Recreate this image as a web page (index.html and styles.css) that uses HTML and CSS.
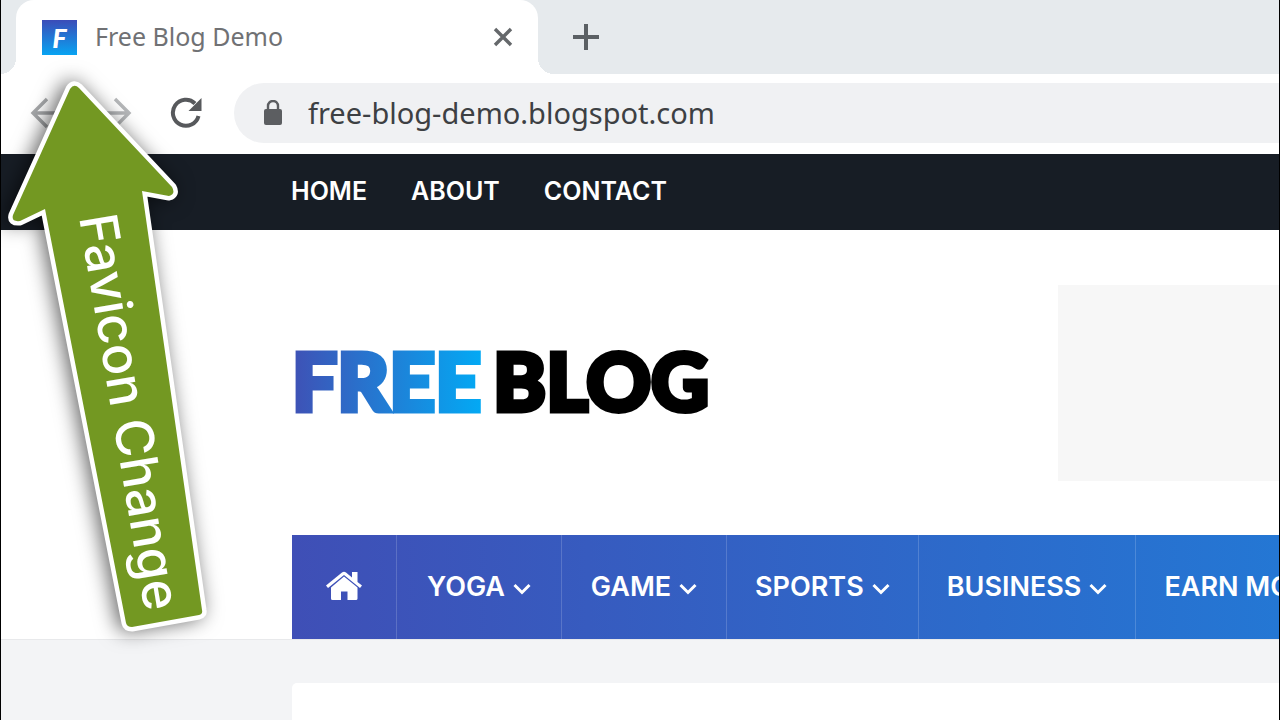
FILE: index.html
```html
<!DOCTYPE html>
<html lang="en">
<head>
<meta charset="utf-8">
<title>Free Blog Demo</title>
<link rel="stylesheet" href="styles.css">
</head>
<body>
<div class="frame">
  <header class="browser">
    <div class="tab-strip">
      <div class="tab">
        <span class="favicon">F</span>
        <span class="tab-title">Free Blog Demo</span>
        <button class="icon-button" aria-label="Close tab"><svg width="20" height="20" viewBox="0 0 20 20"><path d="M2 2L18 18M18 2L2 18" stroke="#65686b" stroke-width="3.4"/></svg></button>
      </div>
      <button class="icon-button new-tab" aria-label="New tab"><svg width="28" height="28" viewBox="0 0 28 28"><path d="M1 14H27M14 1V27" stroke="#5b6064" stroke-width="4"/></svg></button>
    </div>
    <div class="toolbar">
      <div class="history">
        <button class="icon-button" aria-label="Back"><svg width="34" height="34" viewBox="0 0 34 34" fill="none" stroke="#a5a7a9" stroke-width="3.4"><path d="M33 17H3M17 3L3 17L17 31"/></svg></button>
        <button class="icon-button" aria-label="Forward"><svg width="34" height="34" viewBox="0 0 34 34" fill="none" stroke="#b5b7b9" stroke-width="3.4"><path d="M1 17H31M17 3L31 17L17 31"/></svg></button>
      </div>
      <button class="icon-button" aria-label="Reload"><svg width="32" height="32" viewBox="0 0 32 32"><path d="M28.5 19A13 13 0 1 1 25 6.5" fill="none" stroke="#57595c" stroke-width="4"/><path d="M31.500 1V14H18.500Z" fill="#57595c"/></svg></button>
      <label class="address">
        <svg width="18" height="25" viewBox="0 0 18 25"><rect y="9" width="18" height="16" rx="2" fill="#5c5e61"/><path d="M4 10V6A5 5 0 0 1 14 6V10" fill="none" stroke="#5c5e61" stroke-width="2.400"/></svg>
        <input class="url" type="text" aria-label="Address" value="free-blog-demo.blogspot.com">
      </label>
    </div>
  </header>

  <nav class="top-links" aria-label="Pages">
    <a href="#">HOME</a><a href="#">ABOUT</a><a href="#">CONTACT</a>
  </nav>

  <div class="masthead">
    <div class="brand-row">
      <a class="logo" href="#"><span class="logo-free">FREE</span> <span>BLOG</span></a>
      <div class="ad"></div>
    </div>
    <nav class="menu" aria-label="Categories">
      <a class="home" href="#" aria-label="Home"><svg width="36" height="30" viewBox="0 0 36 30" fill="#fff"><path d="M0 14.500L16 1.500Q18 0 20 1.500L26 6.400V1H31.500V11L36 14.500L34 17L18 4L2 17Z"/><path d="M5 16.500L18 5.500L31.500 16.500V27.500Q31.500 29 30 29H21.500V20.500H15V29H6.500Q5 29 5 27.500Z"/></svg></a>
      <a href="#">YOGA<svg class="chevron" viewBox="0 0 18 12"><path d="M1.500 2L9 9.500L16.500 2"/></svg></a>
      <a href="#">GAME<svg class="chevron" viewBox="0 0 18 12"><path d="M1.500 2L9 9.500L16.500 2"/></svg></a>
      <a href="#">SPORTS<svg class="chevron" viewBox="0 0 18 12"><path d="M1.500 2L9 9.500L16.500 2"/></svg></a>
      <a href="#">BUSINESS<svg class="chevron" viewBox="0 0 18 12"><path d="M1.500 2L9 9.500L16.500 2"/></svg></a>
      <a href="#">EARN MONEY</a>
    </nav>
  </div>

  <main class="content"><div class="card"></div></main>

  <svg class="callout" width="230" height="660" viewBox="0 0 230 660">
    <path class="callout-shape" d="M70 89Q74 83 79 88L172 187Q176 194 169 196L142 191L202 610Q203 614 199 615L132 627Q127 627 126 623L45 209L20 221Q11 222 13 215Z"/>
    <text class="callout-text" transform="translate(79 217) rotate(80.500)">Favicon Change</text>
  </svg>
</div>
</body>
</html>
```
FILE: styles.css
```css
* { box-sizing: border-box; }

body {
  margin: 0;
  background: #fff;
  font-family: Inter, "Liberation Sans", sans-serif;
}

a { color: inherit; text-decoration: none; }

.frame {
  position: relative;
  display: flex;
  flex-direction: column;
  min-height: 100vh;
  overflow: hidden;
  border: solid #000;
  border-width: 0 1px;
}

.icon-button {
  display: flex;
  padding: 0;
  border: 0;
  background: none;
}

.tab-strip {
  display: flex;
  align-items: center;
  height: 74px;
  padding-left: 15px;
  background: #e6eaed;
}

.tab {
  position: relative;
  display: flex;
  align-items: center;
  width: 522px;
  height: 74px;
  padding: 0 25px 0 26px;
  border-radius: 18px 18px 0 0;
  background: #fff;
}

.tab::before,
.tab::after {
  content: "";
  position: absolute;
  bottom: 0;
  width: 16px;
  height: 16px;
}

.tab::before {
  right: 100%;
  background: radial-gradient(circle at 0 0, transparent 16px, #fff 16px);
}

.tab::after {
  left: 100%;
  background: radial-gradient(circle at 100% 0, transparent 16px, #fff 16px);
}

.favicon {
  display: flex;
  align-items: center;
  justify-content: center;
  width: 35px;
  height: 35px;
  background: linear-gradient(#3b4cb8, #08a4f2);
  color: #fff;
  font: italic 900 27px Lato, sans-serif;
}

.tab-title {
  flex: 1;
  margin-left: 18px;
  padding-bottom: 2px;
  color: #707174;
  font: 25px "Noto Sans", sans-serif;
}

.new-tab { margin-left: 34px; }

.toolbar {
  display: flex;
  align-items: center;
  height: 80px;
  padding: 0 0 2px 29px;
}

.history { display: flex; gap: 34px; margin-right: 38px; }

.address {
  display: flex;
  flex: 1;
  align-items: center;
  gap: 26px;
  height: 60px;
  margin-left: 32px;
  padding: 0 0 2px 30px;
  border-radius: 30px 0 0 30px;
  background: #f0f1f3;
}

.url {
  flex: 1;
  padding: 0;
  border: 0;
  outline: 0;
  background: none;
  color: #3d4043;
  font: 29px "Noto Sans", sans-serif;
}

.top-links {
  display: flex;
  align-items: center;
  gap: 44px;
  height: 76px;
  padding: 0 0 2px 290px;
  background: #171d25;
  color: #fff;
  font-size: 25px;
  font-weight: 600;
}

.masthead {
  padding-left: 291px;
  border-bottom: 1px solid #e8e9eb;
}

.brand-row {
  display: flex;
  align-items: center;
  justify-content: space-between;
  height: 305px;
}

.logo {
  display: flex;
  gap: 12px;
  padding-bottom: 6px;
  color: #000;
  font: 900 80px Lato, sans-serif;
  white-space: nowrap;
  -webkit-text-stroke: 5px #000;
}

.logo-free {
  background: linear-gradient(90deg, #3f51b5, #03a9f4);
  background-clip: text;
  color: transparent;
  -webkit-text-stroke-color: transparent;
}

.ad {
  width: 221px;
  height: 196px;
  background: #f7f7f7;
}

.menu {
  display: flex;
  height: 104px;
  overflow: hidden;
  background: linear-gradient(90deg, #3f4fb6, #2477d4);
  color: #fff;
  font-size: 27px;
  font-weight: 600;
}

.menu a {
  display: flex;
  flex: none;
  align-items: center;
  justify-content: center;
  gap: 8px;
  min-width: 165px;
  padding: 0 28px 2px;
  border-right: 1px solid #ffffff2b;
}

.menu .home {
  min-width: 0;
  padding: 0 34px 2px;
}

.chevron {
  width: 18px;
  height: 12px;
  margin-top: 5px;
  fill: none;
  stroke: #fff;
  stroke-width: 3;
}

.content {
  display: flex;
  flex: 1;
  padding: 43px 0 0 291px;
  background: #f3f4f6;
}

.card {
  flex: 1;
  border-radius: 5px 0 0;
  background: #fff;
}

.callout {
  position: absolute;
  top: 0;
  left: -1px;
  filter: drop-shadow(-4px 0 10px #0009);
}

.callout-shape {
  fill: #739822;
  stroke: #fff;
  stroke-width: 9px;
  stroke-linejoin: round;
  paint-order: stroke;
}

.callout-text {
  fill: #fff;
  font-size: 52px;
  font-weight: 500;
}
```
